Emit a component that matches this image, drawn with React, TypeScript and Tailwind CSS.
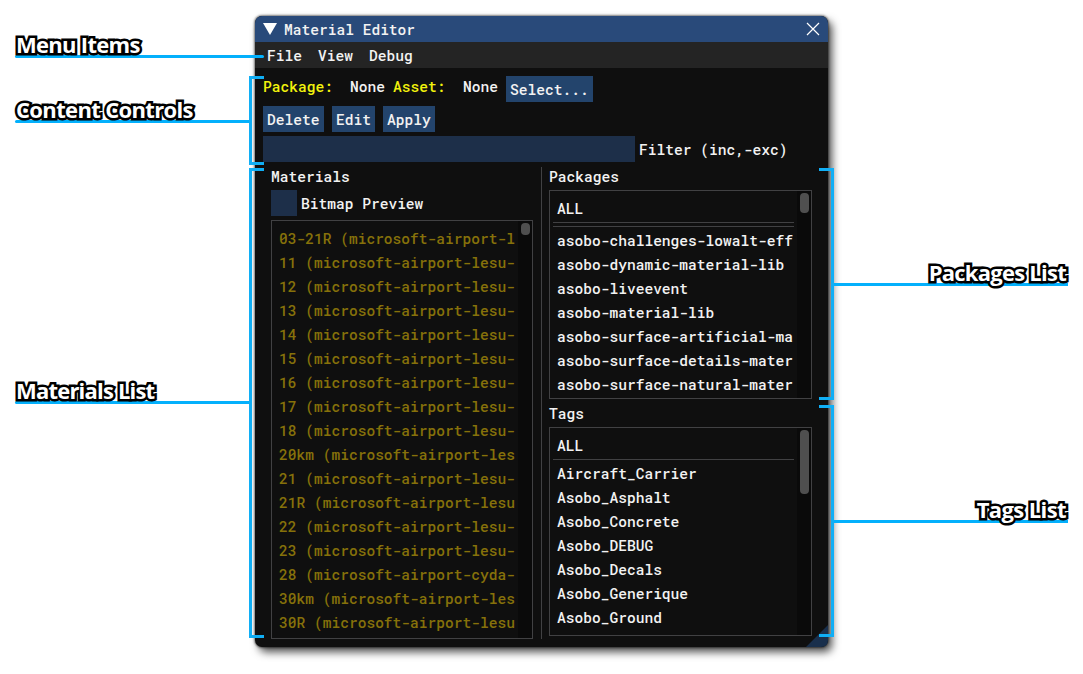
import React from "react";

const materials = [
  "03-21R (microsoft-airport-l",
  "11 (microsoft-airport-lesu-",
  "12 (microsoft-airport-lesu-",
  "13 (microsoft-airport-lesu-",
  "14 (microsoft-airport-lesu-",
  "15 (microsoft-airport-lesu-",
  "16 (microsoft-airport-lesu-",
  "17 (microsoft-airport-lesu-",
  "18 (microsoft-airport-lesu-",
  "20km (microsoft-airport-les",
  "21 (microsoft-airport-lesu-",
  "21R (microsoft-airport-lesu",
  "22 (microsoft-airport-lesu-",
  "23 (microsoft-airport-lesu-",
  "28 (microsoft-airport-cyda-",
  "30km (microsoft-airport-les",
  "30R (microsoft-airport-lesu",
];

const packages = [
  "asobo-challenges-lowalt-eff",
  "asobo-dynamic-material-lib",
  "asobo-liveevent",
  "asobo-material-lib",
  "asobo-surface-artificial-ma",
  "asobo-surface-details-mater",
  "asobo-surface-natural-mater",
];

const tags = [
  "Aircraft_Carrier",
  "Asobo_Asphalt",
  "Asobo_Concrete",
  "Asobo_DEBUG",
  "Asobo_Decals",
  "Asobo_Generique",
  "Asobo_Ground",
];

function Button({ children, className = "" }: { children: React.ReactNode; className?: string }) {
  return (
    <button className={`flex h-[26px] items-center bg-[#23446c] pt-px pl-1 text-left ${className}`}>{children}</button>
  );
}

function Scrollbar({ thumb }: { thumb: string }) {
  return (
    <div className="flex w-[14px] shrink-0 justify-center bg-[#0a0a0a] pt-[2px]">
      <div className={`w-[9px] rounded-[4px] bg-[#4f4f4f] ${thumb}`} />
    </div>
  );
}

function Rows({ items }: { items: string[] }) {
  return (
    <ul>
      {items.map((item) => (
        <li key={item} className="h-6 pl-1 leading-[25px]">{item}</li>
      ))}
    </ul>
  );
}

function Label({ children, className }: { children: string; className: string }) {
  return (
    <div
      className={`absolute z-20 whitespace-nowrap font-['Open_Sans','Noto_Sans',sans-serif] text-[22px] leading-[30px] font-bold text-white [-webkit-text-stroke:5px_#000] [paint-order:stroke_fill] [stroke-linejoin:round] ${className}`}
    >
      {children}
    </div>
  );
}

function Line({ className }: { className: string }) {
  return <div className={`absolute z-10 ${className}`} />;
}

export default function App() {
  return (
    <main className="relative h-[674px] w-[1083px] overflow-hidden bg-white pt-4 pl-[255px]">
      <section className="relative flex h-[631px] w-[573px] flex-col overflow-visible rounded-[7px] bg-[#0f0f0f] font-['Roboto_Mono','DejaVu_Sans_Mono',monospace] text-[14.57px] leading-5 font-medium whitespace-pre text-[#f2f2f2] shadow-[0_0_2px_1px_rgba(0,0,0,0.45),4px_5px_8px_0px_rgba(0,0,0,0.7)]">
        <header className="flex h-[26px] shrink-0 items-center rounded-t-[7px] bg-[#294a7a] pl-2">
          <svg width="14" height="12" viewBox="0 0 14 12" className="shrink-0" fill="#fff">
            <path d="M0 0H14L7 12Z" />
          </svg>
          <h1 className="ml-[7px] grow pt-px">Material Editor</h1>
          <svg width="14" height="14" viewBox="0 0 14 14" className="mr-2" stroke="#fff" strokeWidth="1.2">
            <path d="M1 1L13 13M13 1L1 13" />
          </svg>
        </header>
        <nav className="flex h-[26px] shrink-0 items-center gap-4 bg-[#242424] pt-px pl-3">
          <span>File</span>
          <span>View</span>
          <span>Debug</span>
        </nav>

        <div className="mt-2 flex h-[26px] shrink-0 pl-2 leading-[21px]">
          <span className="w-[87px] text-[#f2f20c]">Package:</span>
          <span className="w-[43px]">None</span>
          <span className="w-[70px] text-[#f2f20c]">Asset:</span>
          <span className="w-[43px]">None</span>
          <Button className="w-[87px]">Select...</Button>
        </div>
        <div className="mt-1 flex shrink-0 gap-2 pl-2">
          <Button className="w-[61px]">Delete</Button>
          <Button className="w-[43px]">Edit</Button>
          <Button className="w-[52px]">Apply</Button>
        </div>
        <div className="mt-1 flex h-[26px] shrink-0 items-center gap-1 pl-2">
          <div className="h-[26px] w-[372px] bg-[#1d2f49]" />
          <span className="pt-px">Filter (inc,-exc)</span>
        </div>

        <div className="mt-[5px] flex h-[472px] pl-4">
          <div className="w-[262px]">
            <h2 className="h-[23px] leading-5">Materials</h2>
            <div className="flex h-[26px] items-center gap-1">
              <div className="size-[26px] bg-[#1d2f49]" />
              <span className="pt-px">Bitmap Preview</span>
            </div>
            <div className="mt-1 flex h-[419px] justify-between border border-[#414143] text-[#86710a]">
              <div className="w-[246px] overflow-hidden pt-[5px] pl-[3px]">
                <Rows items={materials} />
              </div>
              <Scrollbar thumb="h-[12px]" />
            </div>
          </div>
          <div className="ml-2 w-px bg-[#414143]" />
          <div className="ml-[7px] w-[263px]">
            <h2 className="h-[23px] leading-5">Packages</h2>
            <div className="flex h-[209px] justify-between border border-[#414143]">
              <div className="w-[244px] pl-[3px]">
                <div className="mt-[5px] h-6 pl-1 leading-[25px]">ALL</div>
                <div className="mt-[2px] mb-[1px] h-[5px] border-y border-[#414143]" />
                <Rows items={packages} />
              </div>
              <Scrollbar thumb="h-[20px]" />
            </div>
            <h2 className="mt-[5px] h-[23px] leading-5">Tags</h2>
            <div className="flex h-[209px] justify-between border border-[#414143]">
              <div className="w-[244px] pl-[3px]">
                <div className="mt-[5px] h-6 pl-1 leading-[25px]">ALL</div>
                <div className="mt-[2px] mb-[1px] h-px bg-[#414143]" />
                <Rows items={tags} />
              </div>
              <Scrollbar thumb="h-[64px]" />
            </div>
          </div>
        </div>
        <svg width="22" height="22" viewBox="0 0 22 22" className="absolute right-0 bottom-0">
          <path d="M22 0V15Q22 22 15 22H0Z" fill="#192f4c" />
        </svg>
      </section>

      <Line className="top-[55px] left-[15px] h-[3px] w-[249px] rounded-full bg-[#03b0fc]" />
      <Line className="top-[120px] left-[15px] h-[3px] w-[235px] rounded-l-full bg-[#03b0fc]" />
      <Line className="top-[401px] left-[15px] h-[3px] w-[235px] rounded-l-full bg-[#03b0fc]" />
      <Line className="top-[283px] left-[833px] h-[3px] w-[235px] bg-[#03b0fc]" />
      <Line className="top-[520px] left-[833px] h-[3px] w-[235px] bg-[#03b0fc]" />
      <Line className="top-[76px] left-[249px] h-[89px] w-[15px] border-y-[3px] border-l-[3px] border-[#10aef5]" />
      <Line className="top-[168px] left-[249px] h-[470px] w-[15px] border-y-[3px] border-l-[3px] border-[#10aef5]" />
      <Line className="top-[168px] left-[819px] h-[232px] w-[15px] border-y-[3px] border-r-[3px] border-[#10aef5]" />
      <Line className="top-[405px] left-[819px] h-[232px] w-[15px] border-y-[3px] border-r-[3px] border-[#10aef5]" />

      <Label className="top-[29px] left-[16px] tracking-[-0.7px]">Menu Items</Label>
      <Label className="top-[94px] left-[16px] tracking-[-0.65px]">Content Controls</Label>
      <Label className="top-[375px] left-[16px] tracking-[-0.8px]">Materials List</Label>
      <Label className="top-[257px] right-[17px] tracking-[-0.75px]">Packages List</Label>
      <Label className="top-[494px] right-[17px] tracking-[-0.6px]">Tags List</Label>
    </main>
  );
}
